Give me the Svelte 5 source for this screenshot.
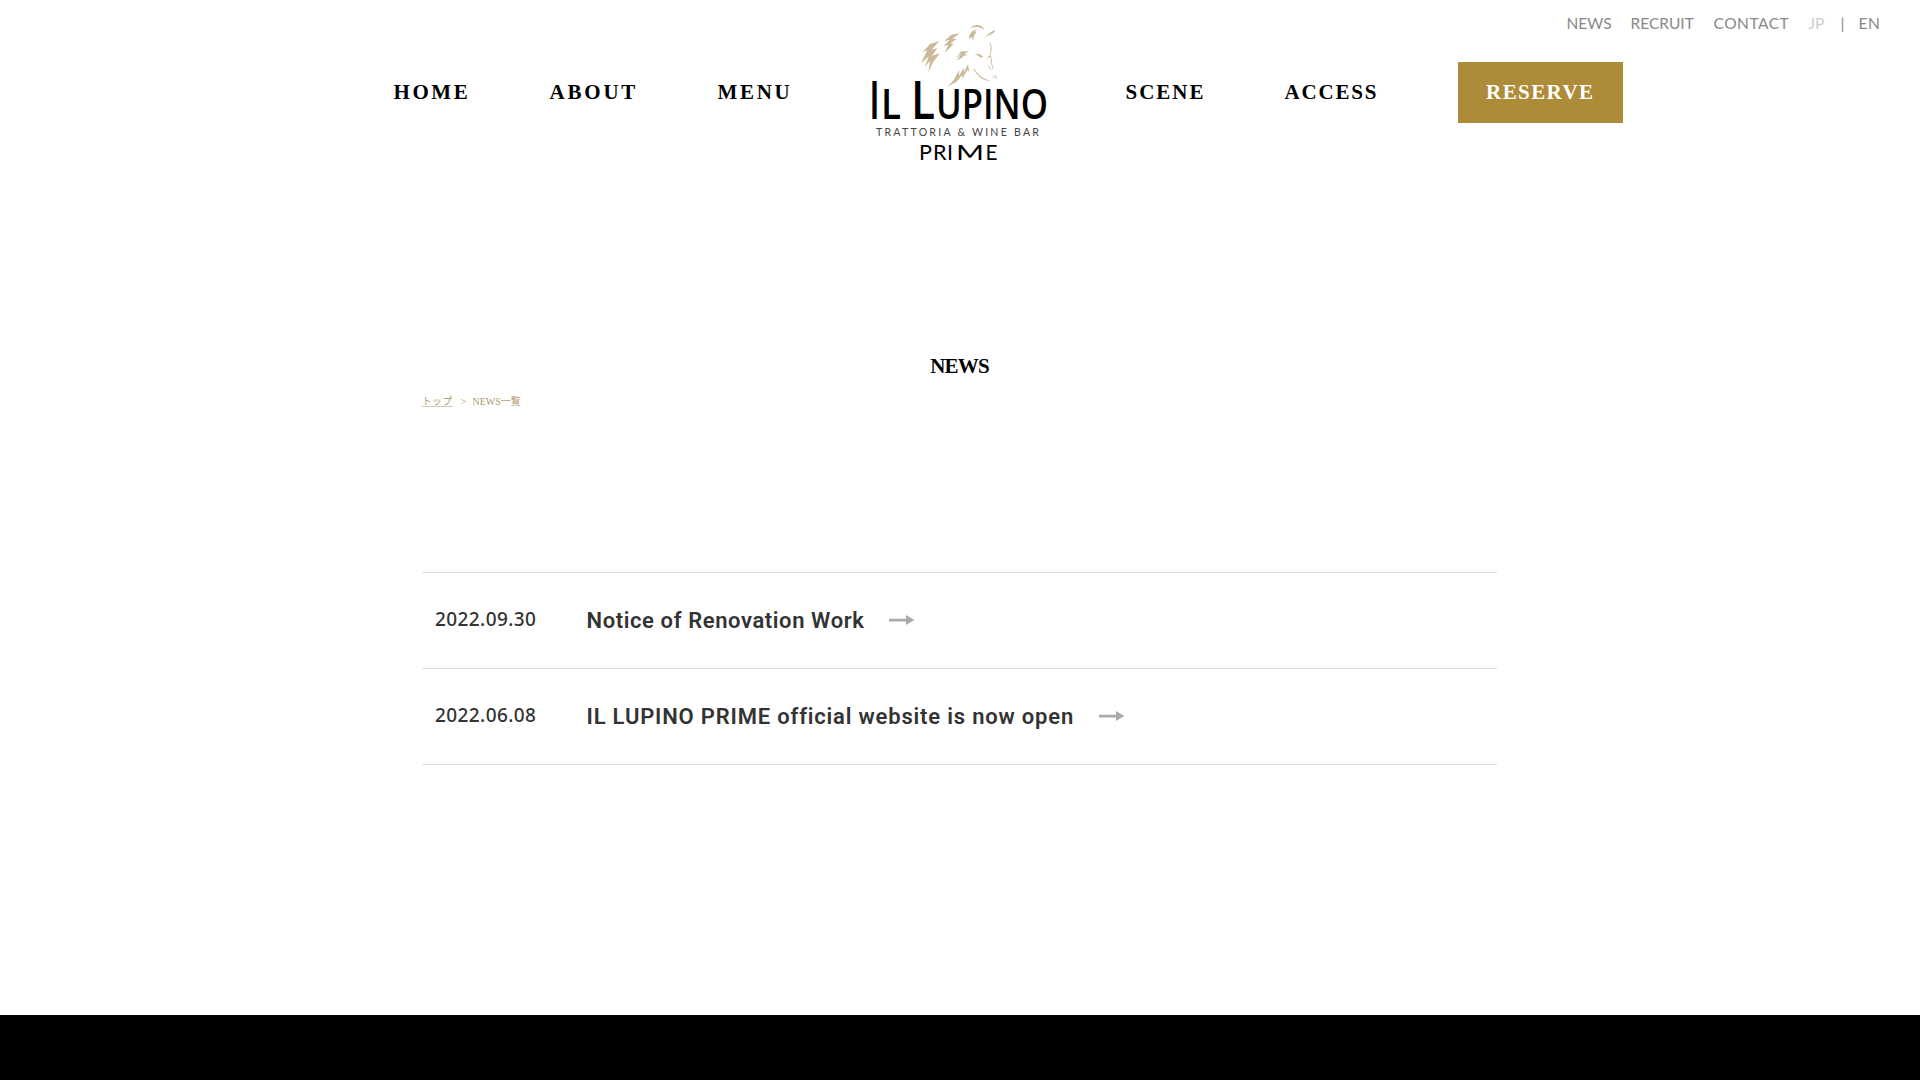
<script>
  const utility = [
    { label: 'NEWS', cls: 'u-news' },
    { label: 'RECRUIT', cls: 'u-recruit' },
    { label: 'CONTACT', cls: 'u-contact' },
    { label: 'JP', cls: 'u-jp' },
    { label: '|', cls: 'u-bar' },
    { label: 'EN', cls: 'u-en' }
  ];
  const left = ['home', 'about', 'menu'];
  const right = ['scene', 'access'];
  const news = [
    { date: '2022.09.30', title: 'Notice of Renovation Work', cls: 'first' },
    { date: '2022.06.08', title: 'IL LUPINO PRIME official website is now open', cls: 'second' }
  ];
</script>

<div class="page">
  <header>
    <div class="utility">
      {#each utility as item}<span class={item.cls}>{item.label}</span>{/each}
    </div>
    <nav>
      {#each left as name}<a class={name} href="#{name}">{name.toUpperCase()}</a>{/each}
      <svg class="logo" width="200" height="155" viewBox="860 15 200 155" role="img" aria-label="Il Lupino Prime">
        <g transform="translate(910 20) scale(.33333)" fill="#cbb999">
          <path d="M88 63L60 72L38 97L52 91L33 129L56 110L44 142L60 122L55 157L68 128L90 99L66 108L82 84L64 90Z" />
          <path d="M149 40L124 44L103 63L119 60L100 79L115 74L103 98L118 85L131 73L121 71L140 56L127 56Z" />
          <path d="M180 23Q192 13 205 15Q220 18 222 31Q214 22 203 21Q190 20 180 23ZM177 58Q176 42 188 33L204 28L194 36L200 36Q190 45 190 62L185 51Z" />
          <path d="M224 57Q236 36 257 30Q250 43 240 44Q232 46 224 57Z" />
          <path d="M176 94L155 94L145 103L155 102L137 110L150 109L139 121L160 112L157 108L173 106L163 102Z" />
          <path d="M193 102L210 103L220 110L212 113L205 107ZM230 112L242 107L238 113Z" />
          <path d="M174 133L162 157L161 143L147 168L148 150L131 180L113 200L141 184L156 166L157 176L172 150L178 157Z" />
          <path d="M191 145Q204 171 237 182Q205 179 191 145Z" stroke="#cbb999" stroke-width="1.5" />
          <path d="M240 69Q246 80 243 93L240 106Q247 118 244 130L248 141M236 137L240 148M246 148L249 142M248 172Q258 164 260 172L257 177" fill="none" stroke="#cbb999" stroke-width="2.8" />
        </g>
        <g class="wordmark">
          <text x="869" y="119" font-size="52" textLength="11" lengthAdjust="spacingAndGlyphs">I</text>
          <text x="881" y="119" font-size="41" textLength="20" lengthAdjust="spacingAndGlyphs">L</text>
          <text x="911" y="119" font-size="52" textLength="24" lengthAdjust="spacingAndGlyphs">L</text>
          <text x="936" y="119" font-size="41" textLength="112" lengthAdjust="spacingAndGlyphs">UPINO</text>
        </g>
        <text class="thin" x="876" y="136.4" font-size="10.6" textLength="163" lengthAdjust="spacing">TRATTORIA &amp; WINE BAR</text>
        <g class="prime" font-size="21.5">
          <text x="919 933 947" y="160">PRI</text>
          <text x="956" y="160" textLength="28" lengthAdjust="spacingAndGlyphs">M</text>
          <text x="985.5" y="160" textLength="12" lengthAdjust="spacingAndGlyphs">E</text>
        </g>
      </svg>
      {#each right as name}<a class={name} href="#{name}">{name.toUpperCase()}</a>{/each}
      <a class="reserve" href="#reserve">RESERVE</a>
    </nav>
  </header>

  <main>
    <h1>NEWS</h1>
    <div class="crumbs"><a href="#top">トップ</a><i>&gt;</i><span>NEWS一覧</span></div>
    <ul>
      {#each news as item}
        <li class={item.cls}>
          <time>{item.date}</time>
          <a href="#news"><span class="title">{item.title}</span>
            <svg width="26" height="12" viewBox="0 0 26 12"><path d="M0 4.8H17V1L25.4 6L17 11V7.4H0Z" fill="#aaa" /></svg>
          </a>
        </li>
      {/each}
    </ul>
  </main>
  <footer></footer>
</div>

<style>
  :global(body) { background: #fff; }
  .page { width: 1920px; height: 1080px; overflow: hidden; display: flex; flex-direction: column; }
  a { color: inherit; text-decoration: none; }
  header { height: 185px; flex: none; }
  .utility { height: 47px; display: flex; box-sizing: border-box; padding-left: 1566.5px; font: 15.5px/47px Lato, sans-serif; color: #888; }
  .utility span { flex: none; white-space: nowrap; }
  .u-news { width: 64px; }
  .u-recruit { width: 83px; }
  .u-contact { width: 95px; letter-spacing: .5px; }
  .utility .u-jp { width: 32px; color: #ccc; }
  .u-bar { width: 18px; }
  .u-en { letter-spacing: .5px; }
  nav { display: grid; grid-template-columns: 156px 168px 136px 254px 151px 199px 165.5px; margin: -32px 0 0 393.5px; align-items: start; }
  nav a { font: bold 21px/61px "Liberation Serif", serif; color: #000; margin-top: 47px; white-space: nowrap; }
  .home { letter-spacing: 2.6px; }
  .about { letter-spacing: 2.8px; }
  .menu { letter-spacing: 2.7px; }
  .scene { letter-spacing: 2px; padding-left: 18px; }
  .access { letter-spacing: 1.8px; padding-left: 26px; }
  nav .reserve { letter-spacing: 1.4px; background: #ad8b39; color: #fff; height: 61px; text-align: center; }
  .logo { display: block; margin-left: 6.5px; overflow: visible; }
  .wordmark { font-family: "Open Sans", sans-serif; font-weight: 600; fill: #000; }
  .thin { font-family: Lato, sans-serif; fill: #444; }
  .prime { font-family: Lato, sans-serif; fill: #000; }
  main { flex: none; width: 1075px; margin-left: 422px; height: 830px; }
  h1 { margin: 0; padding-top: 165px; font: bold 21px/32px "Liberation Serif", serif; letter-spacing: -.8px; text-align: center; color: #000; }
  .crumbs { display: flex; height: 20px; margin-top: 10px; font: 10px/20px "Liberation Serif", "Noto Sans CJK JP", serif; color: #ae986d; }
  .crumbs a { width: 30.5px; height: 15px; line-height: 20px; box-sizing: border-box; border-bottom: 1.5px solid #d7cab1; }
  .crumbs i { font-style: normal; width: 20px; padding-left: 8px; box-sizing: border-box; }
  ul { list-style: none; margin: 160px 0 0; padding: 0; border-top: 1px solid #ddd; }
  li { display: flex; align-items: center; height: 95px; border-bottom: 1px solid #ddd; color: #333; }
  time { width: 151.5px; padding: 0 0 4px 13px; font: 500 19px/30px "Noto Sans", sans-serif; letter-spacing: .4px; }
  li a { display: flex; align-items: center; }
  .title { font: 600 22px/30px Roboto, sans-serif; }
  .first .title { letter-spacing: .6px; }
  .second .title { letter-spacing: .81px; }
  li svg { margin: 0 0 1px 25px; }
  footer { flex: 1; background: #000; }
</style>
